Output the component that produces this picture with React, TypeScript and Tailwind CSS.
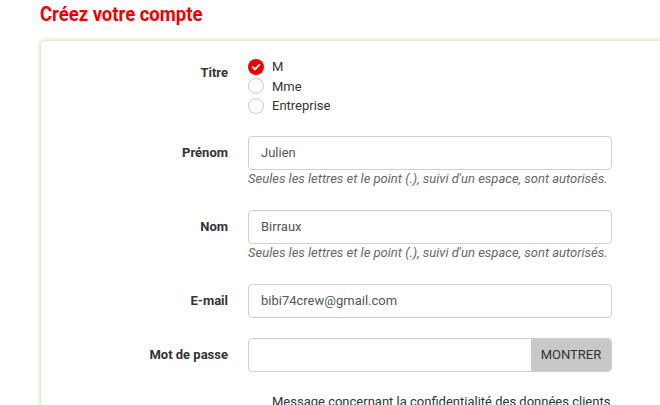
import { useState } from "react";

const TITLES = ["M", "Mme", "Entreprise"];

const HELP = "Seules les lettres et le point (.), suivi d'un espace, sont autorisés.";

function Row({ label, children, className = "" }: { label: string; children: React.ReactNode; className?: string }) {
  return (
    <div className={`flex ${className}`}>
      <label className="w-[207px] shrink-0 pr-[20px] text-right text-[13px] font-bold text-[#333] leading-[34px]">
        {label}
      </label>
      <div className="w-[364px]">{children}</div>
    </div>
  );
}

function Radio({ checked }: { checked: boolean }) {
  if (checked) {
    return (
      <span className="flex h-[16px] w-[16px] items-center justify-center rounded-full bg-[#ee0000]">
        <svg width="10" height="10" viewBox="0 0 10 10" fill="none">
          <path d="M1.8 5.2 L4 7.3 L8.3 2.8" stroke="white" strokeWidth="1.9" strokeLinecap="round" strokeLinejoin="round" />
        </svg>
      </span>
    );
  }
  return <span className="block h-[16px] w-[16px] rounded-full border border-[#c8c8c8] bg-white" />;
}

export default function App() {
  const [title, setTitle] = useState("M");

  return (
    <div className="min-h-[405px] overflow-hidden bg-white font-['Roboto','Liberation_Sans',sans-serif]">
      <h1 className="ml-[40px] pt-[2px] h-[40px] origin-left scale-x-[0.88] text-[21px] font-bold leading-[24px] text-[#ee0000] whitespace-nowrap">
        Créez votre compte
      </h1>

      <div className="ml-[40px] w-[640px] rounded-[5px] border border-[#e3ebd3] shadow-[0_0_4px_rgba(140,180,70,0.45)] pt-[16px] pb-[20px]">
        <div className="flex">
          <div className="w-[207px] shrink-0 pr-[20px] pt-[8px] text-right text-[13px] font-bold text-[#333] leading-[16px]">
            Titre
          </div>
          <div className="flex flex-col">
            {TITLES.map((t) => (
              <button
                key={t}
                onClick={() => setTitle(t)}
                className="flex h-[19.5px] items-center gap-[8px] text-[13px] text-[#333]"
              >
                <Radio checked={title === t} />
                <span>{t}</span>
              </button>
            ))}
          </div>
        </div>

        <Row label="Prénom" className="mt-[20px]">
          <input
            defaultValue="Julien"
            className="h-[34px] w-full rounded-[4px] border border-[#cfcfcf] px-[12px] text-[13px] text-[#555] outline-none"
          />
          <p className="mt-[1px] text-[13px] italic leading-[16px] text-[#666] whitespace-nowrap">{HELP}</p>
        </Row>

        <Row label="Nom" className="mt-[23px]">
          <input
            defaultValue="Birraux"
            className="h-[34px] w-full rounded-[4px] border border-[#cfcfcf] px-[12px] text-[13px] text-[#555] outline-none"
          />
          <p className="mt-[1px] text-[13px] italic leading-[16px] text-[#666] whitespace-nowrap">{HELP}</p>
        </Row>

        <Row label="E-mail" className="mt-[23px]">
          <input
            defaultValue="bibi74crew@gmail.com"
            className="h-[34px] w-full rounded-[4px] border border-[#cfcfcf] px-[12px] text-[13px] text-[#555] outline-none"
          />
        </Row>

        <Row label="Mot de passe" className="mt-[20px]">
          <div className="flex h-[34px] w-full overflow-hidden rounded-[4px] border border-[#cfcfcf]">
            <input type="password" className="flex-1 px-[12px] text-[13px] outline-none" />
            <button className="w-[80px] bg-[#c8c8c8] text-[13px] text-[#333]">MONTRER</button>
          </div>
        </Row>

        <p className="mt-[22px] ml-[231px] text-[13px] leading-[16px] text-[#333] whitespace-nowrap">
          Message concernant la confidentialité des données clients
        </p>
      </div>
    </div>
  );
}
